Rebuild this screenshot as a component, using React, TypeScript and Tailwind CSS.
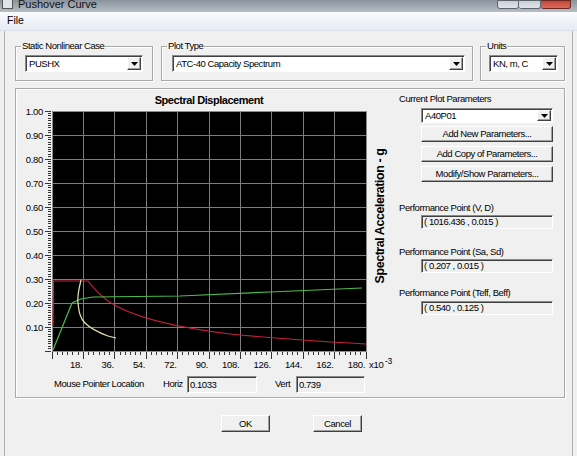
import React from 'react';

const PL = 52;
const PT = 111;
const PW = 314;
const PH = 240;
const DX = PW / 10;
const DY = PH / 10;

const raised =
  'border border-t-white border-l-white border-r-[#404040] border-b-[#404040] shadow-[inset_-1px_-1px_0_#a0a0a0] bg-[#f0f0f0]';
const sunken =
  'border border-t-[#8a8a8a] border-l-[#8a8a8a] border-r-white border-b-white shadow-[inset_1px_1px_0_#404040]';
const etched = 'border border-[#a9a9a9] shadow-[inset_1px_1px_0_#fff,1px_1px_0_#fff]';

const DropBtn = () => (
  <div className={`w-[14px] h-full flex items-center justify-center ${raised}`}>
    <svg width="7" height="4" viewBox="0 0 7 4">
      <path d="M0 0h7L3.5 4z" fill="#000" />
    </svg>
  </div>
);

const Combo = ({ value, className }: { value: string; className: string }) => (
  <div className={`flex bg-white ${sunken} ${className}`}>
    <span className="flex-1 pl-[3px] self-center leading-none">{value}</span>
    <div className="p-[1px] h-full">
      <DropBtn />
    </div>
  </div>
);

const Btn = ({ label, className }: { label: string; className: string }) => (
  <button className={`flex items-center justify-center leading-none ${raised} ${className}`}>{label}</button>
);

const ReadBox = ({ value, className }: { value: string; className: string }) => (
  <div className={`flex items-center pl-[2px] bg-[#f0f0f0] leading-none ${sunken} ${className}`}>{value}</div>
);

function Chart() {
  const xs = Array.from({ length: 11 }, (_, i) => PL + i * DX);
  const ys = Array.from({ length: 11 }, (_, i) => PT + i * DY);
  const xMinor = Array.from({ length: 61 }, (_, i) => PL + (i * DX) / 6);
  const yMinor = Array.from({ length: 101 }, (_, i) => PT + (i * DY) / 10);

  return (
    <svg width={380} height={283} viewBox="16 89 380 283" className="block">
      <text x={209} y={104} textAnchor="middle" fontWeight="bold" fontSize={11} fontFamily="Liberation Sans, sans-serif">
        Spectral Displacement
      </text>

      {/* plot area */}
      <rect x={PL} y={PT} width={PW} height={PH} fill="#000" />
      <g stroke="#7d7d7d" strokeWidth={1} shapeRendering="crispEdges">
        {xs.slice(1, 10).map((x) => (
          <line key={'gx' + x} x1={x} x2={x} y1={PT} y2={PT + PH} />
        ))}
        {ys.slice(1, 10).map((y) => (
          <line key={'gy' + y} x1={PL} x2={PL + PW} y1={y} y2={y} />
        ))}
        <rect x={PL} y={PT} width={PW} height={PH} fill="none" stroke="#8c8c8c" />
      </g>

      {/* rulers */}
      <g stroke="#333" shapeRendering="crispEdges">
        {yMinor.map((y, i) => (
          <line key={'ym' + i} x1={i % 10 === 0 ? 45 : 48} x2={51} y1={y} y2={y} />
        ))}
        {xMinor.map((x, i) => (
          <line key={'xm' + i} x1={x} x2={x} y1={PT + PH + 1} y2={i % 6 === 0 ? PT + PH + 8 : PT + PH + 4} />
        ))}
      </g>

      <g fontSize={9.5} letterSpacing={-0.3} fontFamily="Liberation Sans, sans-serif" fill="#000">
        {ys.slice(0, 10).map((y, i) => (
          <text key={'yl' + i} x={43} y={y + 4} textAnchor="end">
            {(1 - i * 0.1).toFixed(2)}
          </text>
        ))}
        {xs.slice(1).map((x, i) => (
          <text key={'xl' + i} x={x - 1} y={368} textAnchor="end">
            {(i + 1) * 18}.
          </text>
        ))}
        <text x={369} y={368}>x10</text>
        <text x={385} y={364} fontSize={8.5}>
          -3
        </text>
      </g>

      <text
        x={384}
        y={216}
        transform="rotate(-90 384 216)"
        textAnchor="middle"
        fontWeight="bold"
        fontSize={12.5}
        fontFamily="Liberation Sans, sans-serif"
      >
        Spectral Acceleration - g
      </text>

      {/* curves */}
      <g fill="none" strokeWidth={1.2}>
        <path
          d="M53 326 L53.5 281 L88 281 C96 291 104 300 118 307 C140 318 180 328 230 334 C280 339 330 342 366 344"
          stroke="#c8203c"
        />
        <path d="M53 350 L72 303 L81 299 L93 297 L180 296 L270 292 L362 288" stroke="#4dbb4d" />
        <path
          d="M81 280 C79 288 77 296 78 303 C79 312 80 318 85 323 C90 328 97 332 108 336 L116 338"
          stroke="#e6e2b4"
        />
      </g>
    </svg>
  );
}

export default function App() {
  return (
    <div className="w-[577px] h-[456px] overflow-hidden flex flex-col bg-[#f0f0f0] text-black text-[9.5px] tracking-[-0.45px] font-['Liberation_Sans',sans-serif]">
      {/* title bar, cut off by the screen edge */}
      <div className="h-[12px] shrink-0 overflow-hidden flex items-start bg-gradient-to-b from-[#8a929c] to-[#b7bec6]">
        <div className="ml-[2px] -mt-[2px] w-[11px] h-[11px] border border-[#555] bg-[#dfe4ea]" />
        <span className="ml-[5px] -mt-[4px] text-[11px] tracking-normal text-[#111]">Pushover Curve</span>
        <div className="ml-auto mr-[6px] flex">
          <div className="w-[22px] h-[9px] border border-[#5d646d] rounded-b-[3px] bg-gradient-to-b from-[#c9ced5] to-[#e2e6eb]" />
          <div className="w-[22px] h-[9px] border border-l-0 border-[#5d646d] rounded-b-[3px] bg-gradient-to-b from-[#c9ced5] to-[#e2e6eb]" />
          <div className="w-[30px] h-[9px] border border-l-0 border-[#6d2a24] rounded-b-[3px] bg-gradient-to-b from-[#c6453a] to-[#d86a5c]" />
        </div>
      </div>

      {/* menu bar */}
      <div className="h-[19px] shrink-0 flex items-center pl-[7px] bg-gradient-to-b from-[#fafbfd] to-[#e6ebf3] border-b border-[#dde2ea]">
        <span className="text-[10.5px] tracking-normal">File</span>
      </div>

      {/* dialog body */}
      <div className="flex-1 mx-[4px] border-x border-[#b0b0b0] pl-[10px] pt-[9px]">
        <div className="flex">
          <fieldset className={`h-[41px] w-[138px] ${etched}`}>
            <legend className="ml-[5px] px-[1px] leading-[12px]">Static Nonlinear Case</legend>
            <div className="pl-[9px] pt-[3px]">
              <Combo value="PUSHX" className="w-[118px] h-[17px]" />
            </div>
          </fieldset>
          <fieldset className={`ml-[8px] h-[41px] w-[312px] ${etched}`}>
            <legend className="ml-[5px] px-[1px] leading-[12px]">Plot Type</legend>
            <div className="pl-[10px] pt-[3px]">
              <Combo value="ATC-40 Capacity Spectrum" className="w-[293px] h-[17px]" />
            </div>
          </fieldset>
          <fieldset className={`ml-[7px] h-[41px] w-[85px] ${etched}`}>
            <legend className="ml-[5px] px-[1px] leading-[12px]">Units</legend>
            <div className="pl-[8px] pt-[3px]">
              <Combo value="KN, m, C" className="w-[69px] h-[17px]" />
            </div>
          </fieldset>
        </div>

        {/* main plot group */}
        <div className={`mt-[7px] w-[550px] h-[310px] flex ${etched}`}>
          <div className="w-[380px] flex flex-col">
            <Chart />
            <div className="h-[25px] flex items-center pl-[38px] whitespace-nowrap">
              <span className="w-[109px]">Mouse Pointer Location</span>
              <span className="w-[24px]">Horiz</span>
              <ReadBox value="0.1033" className="w-[70px] h-[17px]" />
              <span className="w-[18px]" />
              <span className="w-[21px]">Vert</span>
              <ReadBox value="0.739" className="w-[69px] h-[17px]" />
            </div>
          </div>

          <div className="flex-1 flex flex-col pl-[3px] whitespace-nowrap">
            <span className="mt-[4px] leading-[12px]">Current Plot Parameters</span>
            <Combo value="A40P01" className="ml-[22px] mt-[3px] w-[132px] h-[15px]" />
            <Btn label="Add New Parameters..." className="ml-[22px] mt-[3px] w-[132px] h-[16px]" />
            <Btn label="Add Copy of Parameters..." className="ml-[22px] mt-[4px] w-[132px] h-[16px]" />
            <Btn label="Modify/Show Parameters..." className="ml-[22px] mt-[4px] w-[132px] h-[16px]" />

            <span className="mt-[20px] leading-[12px]">Performance Point (V, D)</span>
            <ReadBox value="( 1016.436 , 0.015 )" className="ml-[22px] mt-[1px] w-[132px] h-[14px]" />
            <span className="mt-[17px] leading-[12px]">Performance Point (Sa, Sd)</span>
            <ReadBox value="( 0.207 , 0.015 )" className="ml-[22px] mt-[1px] w-[132px] h-[14px]" />
            <span className="mt-[14px] leading-[12px]">Performance Point (Teff, Beff)</span>
            <ReadBox value="( 0.540 , 0.125 )" className="ml-[22px] mt-[2px] w-[132px] h-[14px]" />
          </div>
        </div>

        <div className="mt-[17px] flex pl-[206px]">
          <Btn label="OK" className="w-[49px] h-[17px]" />
          <Btn label="Cancel" className="ml-[43px] w-[49px] h-[17px]" />
        </div>
      </div>
    </div>
  );
}
